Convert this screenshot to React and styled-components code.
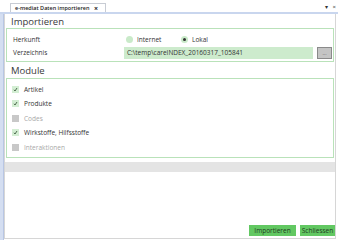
import React from 'react';
import styled, { createGlobalStyle } from 'styled-components';

const GlobalStyle = createGlobalStyle`
    html, body {
        margin: 0;
        padding: 0;
        background: #ffffff;
    }
    body {
        font-family: "Open Sans", "Noto Sans", sans-serif;
        color: #333333;
    }
`;

const Window = styled.div`
    width: 338px;
    height: 240px;
    display: flex;
    flex-direction: column;
    background: #ffffff;
    overflow: hidden;
`;

const TabStrip = styled.div`
    height: 12px;
    display: flex;
    align-items: flex-end;
    justify-content: space-between;
    padding-left: 10px;
    padding-right: 2px;
    border-bottom: 2px solid #c9d6ee;
`;

const Tab = styled.div`
    height: 9px;
    width: 96px;
    box-sizing: border-box;
    display: flex;
    align-items: center;
    justify-content: space-between;
    padding: 0 7px 0 4px;
    background: #ffffff;
    border: 1px solid #c8ccd4;
    border-bottom: none;
    font-size: 5.5px;
    font-weight: 600;
    color: #222222;
    white-space: nowrap;
`;

const TabClose = styled.span`
    font-size: 7px;
    font-weight: 700;
`;

const StripControls = styled.div`
    align-self: center;
    display: flex;
    gap: 5px;
    font-size: 6px;
    color: #333333;
    padding-top: 2px;
`;

const Body = styled.div`
    flex: 1;
    display: flex;
    min-height: 0;
`;

const Rail = styled.div`
    width: 3px;
    background: #d4def1;
    border-right: 1px solid #b8c6e4;
`;

const Panel = styled.div`
    flex: 1;
    display: flex;
    flex-direction: column;
    margin-right: 2px;
    margin-bottom: 1px;
    border-left: 1px solid #d6d6d6;
    border-right: 1px solid #d6d6d6;
    border-bottom: 1px solid #d6d6d6;
`;

const SectionTitle = styled.div`
    height: ${props => props.h || 14}px;
    display: flex;
    align-items: center;
    padding-left: 6px;
    font-size: 9.5px;
    color: #3a3a3a;
`;

const GroupBox = styled.div`
    margin: 0 1px;
    border: 1px solid #b9e2b9;
    padding: ${props => props.pad || '4px 0'};
    display: flex;
    flex-direction: column;
`;

const FieldRow = styled.div`
    height: 13px;
    display: flex;
    align-items: center;
    padding-left: 6px;
    font-size: 6.5px;
    color: #333333;
`;

const FieldLabel = styled.div`
    width: 111px;
`;

const RadioGroup = styled.div`
    display: flex;
    align-items: center;
    padding-left: 2px;
`;

const RadioOption = styled.div`
    display: flex;
    align-items: center;
    gap: 4px;
    width: ${props => props.width || 'auto'};
`;

const RadioDot = styled.span`
    width: 7px;
    height: 7px;
    border-radius: 50%;
    background: #c9eac9;
    display: flex;
    align-items: center;
    justify-content: center;
    &::after {
        content: '';
        display: ${props => (props.checked ? 'block' : 'none')};
        width: 3px;
        height: 3px;
        border-radius: 50%;
        background: #333333;
    }
`;

const PathField = styled.div`
    width: 189px;
    height: 12px;
    box-sizing: border-box;
    background: #cdebcd;
    display: flex;
    align-items: center;
    padding-left: 3px;
    color: #333333;
`;

const BrowseButton = styled.div`
    width: 15px;
    height: 12px;
    box-sizing: border-box;
    margin-left: 4px;
    background: #c4c4c4;
    border: 1px solid #8a8a8a;
    font-size: 5px;
    color: #555555;
    display: flex;
    align-items: center;
    justify-content: center;
`;

const CheckRow = styled.div`
    height: 14.5px;
    display: flex;
    align-items: center;
    gap: 5px;
    padding-left: 5px;
    font-size: 6.5px;
    color: ${props => (props.disabled ? '#a8a8a8' : '#333333')};
`;

const CheckBox = styled.span`
    width: 7px;
    height: 7px;
    display: flex;
    align-items: center;
    justify-content: center;
    background: ${props => (props.checked ? '#d3eed3' : '#c8c8c8')};
`;

const GreyBar = styled.div`
    height: 10px;
    margin-top: 4px;
    background: #e4e4e4;
`;

const Spacer = styled.div`
    flex: 1;
`;

const Footer = styled.div`
    display: flex;
    justify-content: flex-end;
    gap: 4px;
    padding: 0 0 2px 0;
`;

const ActionButton = styled.div`
    width: ${props => props.w}px;
    height: 11px;
    display: flex;
    align-items: center;
    justify-content: center;
    background: #62c862;
    color: #1f3a1f;
    font-size: 6.5px;
`;

const Check = () => (
    <svg width="5" height="5" viewBox="0 0 10 10">
        <path d="M2 5.5 L4 8 L8 2" fill="none" stroke="#2d4a2d" strokeWidth="1.6"/>
    </svg>
);

const modules = [
    { name: 'Artikel', checked: true },
    { name: 'Produkte', checked: true },
    { name: 'Codes', checked: false },
    { name: 'Wirkstoffe, Hilfsstoffe', checked: true },
    { name: 'Interaktionen', checked: false }
];

export default function App() {
    return (
        <Window>
            <GlobalStyle/>
            <TabStrip>
                <Tab>
                    e-mediat Daten importieren
                    <TabClose>×</TabClose>
                </Tab>
                <StripControls>
                    <span>▾</span>
                    <span>×</span>
                </StripControls>
            </TabStrip>
            <Body>
                <Rail/>
                <Panel>
                    <SectionTitle>Importieren</SectionTitle>
                    <GroupBox pad="4px 0 2px">
                        <FieldRow>
                            <FieldLabel>Herkunft</FieldLabel>
                            <RadioGroup>
                                <RadioOption width="55px">
                                    <RadioDot/>
                                    Internet
                                </RadioOption>
                                <RadioOption>
                                    <RadioDot checked/>
                                    Lokal
                                </RadioOption>
                            </RadioGroup>
                        </FieldRow>
                        <FieldRow>
                            <FieldLabel>Verzeichnis</FieldLabel>
                            <PathField>C:\temp\careINDEX_20160317_105841</PathField>
                            <BrowseButton>...</BrowseButton>
                        </FieldRow>
                    </GroupBox>
                    <SectionTitle h={16}>Module</SectionTitle>
                    <GroupBox pad="3px 0 2px">
                        {modules.map((m, i) => (
                            <CheckRow key={i} disabled={!m.checked}>
                                <CheckBox checked={m.checked}>
                                    {m.checked && <Check/>}
                                </CheckBox>
                                {m.name}
                            </CheckRow>
                        ))}
                    </GroupBox>
                    <GreyBar/>
                    <Spacer/>
                    <Footer>
                        <ActionButton w={47}>Importieren</ActionButton>
                        <ActionButton w={35}>Schliessen</ActionButton>
                    </Footer>
                </Panel>
            </Body>
        </Window>
    );
}
